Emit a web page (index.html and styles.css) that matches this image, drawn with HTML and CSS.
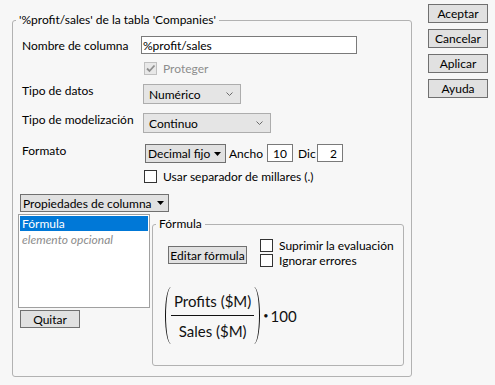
FILE: index.html
```html
<!DOCTYPE html>
<html lang="es">
<head>
<meta charset="utf-8">
<title>Propiedades de columna</title>
<link rel="stylesheet" href="styles.css">
</head>
<body>
<div class="dialog">
  <fieldset class="group">
    <legend class="legend">'%profit/sales' de la tabla 'Companies'</legend>

    <div class="row row-name">
      <span class="label">Nombre de columna</span>
      <span class="textbox name-box">%profit/sales</span>
    </div>

    <div class="row row-protect">
      <span class="check check-disabled">
        <svg width="11" height="11" viewBox="0 0 11 11"><path d="M2 5.5 L4.5 8 L9.5 2.5" fill="none" stroke="#8f8f8f" stroke-width="1.8"/></svg>
      </span>
      <span class="check-text disabled">Proteger</span>
    </div>

    <div class="row row-top row-datos">
      <span class="label label-top">Tipo de datos</span>
      <span class="combo combo-datos">Numérico
        <svg class="chev" width="7" height="4" viewBox="0 0 7 4"><path d="M0.5 0.5 L3.5 3.5 L6.5 0.5" fill="none" stroke="#6a6a6a" stroke-width="1"/></svg>
      </span>
    </div>

    <div class="row row-top row-model">
      <span class="label label-top">Tipo de modelización</span>
      <span class="combo combo-model">Continuo
        <svg class="chev" width="7" height="4" viewBox="0 0 7 4"><path d="M0.5 0.5 L3.5 3.5 L6.5 0.5" fill="none" stroke="#6a6a6a" stroke-width="1"/></svg>
      </span>
    </div>

    <div class="row row-top row-format">
      <span class="label label-top label-format">Formato</span>
      <span class="menu menu-format">Decimal fijo
        <svg class="tri" width="7" height="4" viewBox="0 0 7 4"><path d="M0 0 L7 0 L3.5 4 Z" fill="#000"/></svg>
      </span>
      <span class="inline-label ancho">Ancho</span>
      <span class="textbox num-box">10</span>
      <span class="inline-label dic">Dic</span>
      <span class="textbox num-box">2</span>
    </div>

    <div class="row row-sep">
      <span class="check"></span>
      <span class="check-text">Usar separador de millares (.)</span>
    </div>

    <div class="row row-props">
      <span class="menu menu-props">Propiedades de columna
        <svg class="tri" width="7" height="4" viewBox="0 0 7 4"><path d="M0 0 L7 0 L3.5 4 Z" fill="#000"/></svg>
      </span>
    </div>

    <div class="lower">
      <div class="list-col">
        <div class="list">
          <div class="list-item selected">Fórmula</div>
          <div class="list-item optional">elemento opcional</div>
        </div>
        <span class="button quitar">Quitar</span>
      </div>

      <fieldset class="group inner">
        <legend class="legend inner-legend">Fórmula</legend>
        <div class="formula-top">
          <span class="button edit">Editar fórmula</span>
          <div class="checks">
            <div class="check-row"><span class="check"></span><span class="check-text">Suprimir la evaluación</span></div>
            <div class="check-row"><span class="check"></span><span class="check-text">Ignorar errores</span></div>
          </div>
        </div>
        <div class="formula">
          <span class="paren paren-left"></span>
          <div class="fraction">
            <span class="num">Profits ($M)</span>
            <span class="den">Sales ($M)</span>
          </div>
          <span class="paren paren-right"></span>
          <span class="times">•</span>
          <span class="factor">100</span>
        </div>
      </fieldset>
    </div>
  </fieldset>

  <div class="buttons">
    <span class="button side">Aceptar</span>
    <span class="button side">Cancelar</span>
    <span class="button side">Aplicar</span>
    <span class="button side">Ayuda</span>
  </div>
</div>
</body>
</html>
```

FILE: styles.css
```css
* { box-sizing: border-box; }

html, body {
  margin: 0;
  padding: 0;
}

body {
  width: 495px;
  height: 385px;
  overflow: hidden;
  background: #f7f7f7;
  font-family: "Lato", "Open Sans", sans-serif;
  font-size: 12px;
  color: #000;
}

.dialog {
  display: flex;
  align-items: flex-start;
}

/* group boxes */
.group {
  margin: 12px 0 0 12px;
  width: 400px;
  height: 365px;
  min-width: 0;
  border: 1px solid #b2b2b2;
  border-radius: 3px;
  padding: 8px 7px 0 9px;
}

.legend {
  font-size: 12px;
  line-height: 16px;
  padding: 0 3px;
  margin-left: -6px;
}

.row {
  display: flex;
  align-items: center;
}

.row-top { align-items: flex-start; }

.label {
  flex: none;
  width: 119px;
  white-space: nowrap;
}

.label-top {
  width: 121px;
  line-height: 14px;
}

.label-format { width: 123px; }

.textbox {
  display: flex;
  align-items: center;
  height: 18px;
  background: #fff;
  border: 1px solid #7a7a7a;
  white-space: nowrap;
}

.name-box {
  width: 216px;
  padding-left: 1px;
}

.row-protect {
  margin-top: 8px;
  padding-left: 122px;
  height: 13px;
}

.check {
  flex: none;
  display: flex;
  align-items: center;
  justify-content: center;
  width: 13px;
  height: 13px;
  background: #fff;
  border: 1px solid #333;
}

.check-disabled {
  background: #e8e8e8;
  border-color: #c0c0c0;
}

.check-text {
  margin-left: 6px;
  white-space: nowrap;
  line-height: 13px;
}

.disabled { color: #8d8d8d; }

.row-datos { margin-top: 9px; }
.row-model { margin-top: 9px; }

.combo {
  display: flex;
  align-items: center;
  justify-content: space-between;
  height: 20px;
  padding: 0 7px 0 5px;
  background: #e5e5e5;
  border: 1px solid #adadad;
  white-space: nowrap;
}

.combo-datos { width: 98px; }
.combo-model { width: 128px; }

.row-format { margin-top: 11px; }

.menu {
  display: flex;
  align-items: center;
  justify-content: space-between;
  height: 19px;
  padding: 0 4px 0 2px;
  background: #e1e1e1;
  border: 1px solid #707070;
  white-space: nowrap;
}

.menu-format { width: 81px; }

.inline-label {
  display: flex;
  align-items: center;
  height: 19px;
  white-space: nowrap;
}

.ancho {
  width: 41px;
  padding-left: 3px;
}

.dic {
  width: 24px;
  padding-left: 5px;
}

.num-box {
  width: 26px;
  justify-content: flex-end;
  padding-right: 5px;
}

.row-sep {
  margin-top: 7px;
  padding-left: 122px;
  height: 13px;
}

.row-props {
  margin-top: 11px;
  margin-left: -2px;
}

.menu-props {
  width: 149px;
  height: 18px;
}

/* lower area */
.lower {
  display: flex;
  align-items: flex-start;
  margin-top: 2px;
  margin-left: -4px;
}

.list-col {
  display: flex;
  flex-direction: column;
  align-items: flex-start;
}

.list {
  width: 132px;
  height: 94px;
  background: #fff;
  border: 1px solid #a0a0a0;
  padding: 1px;
}

.list-item {
  height: 15px;
  line-height: 15px;
  padding-left: 2px;
  white-space: nowrap;
}

.selected {
  background: #0078d7;
  color: #fff;
}

.optional {
  margin-top: 1px;
  font-style: italic;
  color: #8c8c8c;
}

.button {
  display: flex;
  align-items: center;
  justify-content: center;
  background: #e1e1e1;
  border: 1px solid #707070;
  white-space: nowrap;
}

.quitar {
  margin: 2px 0 0 2px;
  width: 60px;
  height: 18px;
}

.inner {
  margin: 2px 0 0 2px;
  width: 252px;
  height: 150px;
  padding: 7px 0 0 15px;
}

.inner-legend { margin-left: -12px; }

.formula-top {
  display: flex;
  align-items: flex-start;
}

.edit {
  margin-top: 7px;
  width: 79px;
  height: 18px;
}

.checks {
  margin-left: 13px;
  display: flex;
  flex-direction: column;
  gap: 2px;
}

.check-row {
  display: flex;
  align-items: center;
  height: 13px;
}

/* formula */
.formula {
  display: flex;
  align-items: stretch;
  margin: 20px 0 0 -3px;
  height: 57px;
  font-size: 15px;
  color: #111;
}

.paren {
  width: 6px;
  border: 0 solid #111;
}

.paren-left {
  border-left-width: 1.6px;
  border-radius: 100% 0 0 100% / 50% 0 0 50%;
}

.paren-right {
  border-right-width: 1.6px;
  border-radius: 0 100% 100% 0 / 0 50% 50% 0;
}

.fraction {
  display: flex;
  flex-direction: column;
  align-items: stretch;
  text-align: center;
}

.num {
  padding: 5px 3px 5px;
  line-height: 18px;
  border-bottom: 1px solid #111;
  white-space: nowrap;
}

.den {
  padding: 6px 3px 4px;
  line-height: 18px;
  white-space: nowrap;
}

.times {
  align-self: center;
  font-size: 9px;
  margin-left: 3px;
}

.factor {
  align-self: center;
  margin-left: 2px;
}

/* side buttons */
.buttons {
  display: flex;
  flex-direction: column;
  gap: 6px;
  margin: 4px 0 0 16px;
}

.side {
  width: 60px;
  height: 19px;
}
```
